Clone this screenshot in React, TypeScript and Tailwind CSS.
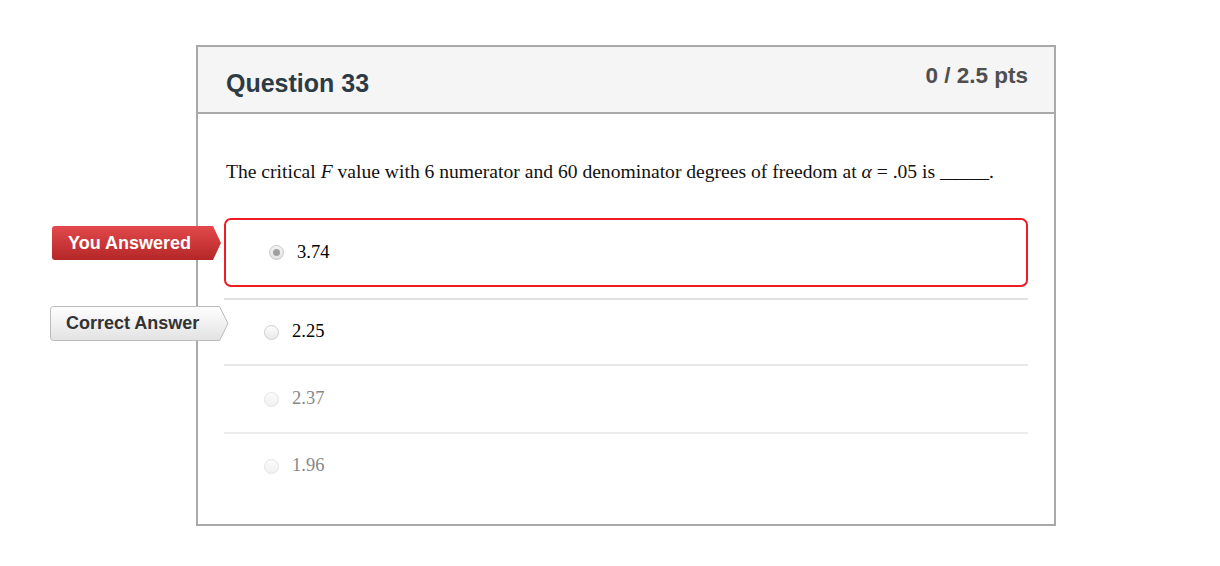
type RadioState = "selected" | "normal" | "faded";

const Radio = ({ state }: { state: RadioState }) => {
  if (state === "selected") {
    return (
      <div className="w-[15px] h-[15px] rounded-full border border-[#c8c8c8] bg-gradient-to-b from-[#f4f4f4] to-[#e2e2e2] flex items-center justify-center">
        <div className="w-[7px] h-[7px] rounded-full bg-[#a0a0a0]" />
      </div>
    );
  }
  if (state === "normal") {
    return <div className="w-[15px] h-[15px] rounded-full border border-[#cfcfcf] bg-gradient-to-b from-[#fdfdfd] to-[#e9e9e9]" />;
  }
  return <div className="w-[15px] h-[15px] rounded-full border border-[#e4e4e4] bg-gradient-to-b from-[#fbfbfb] to-[#f1f1f1]" />;
};

const YouAnsweredTag = () => (
  <div className="absolute left-[-172px] top-[8px] w-[170px] h-[34px] flex items-center">
    <svg className="absolute inset-0" width="170" height="34" viewBox="0 0 170 34">
      <defs>
        <linearGradient id="redTag" x1="0" y1="0" x2="0" y2="1">
          <stop offset="0" stopColor="#e2494b" />
          <stop offset="1" stopColor="#b42727" />
        </linearGradient>
      </defs>
      <path d="M3 0 H161 L169 17 L161 34 H3 Q0 34 0 31 V3 Q0 0 3 0 Z" fill="url(#redTag)" />
    </svg>
    <span className="relative pl-[16px] text-white font-bold text-[18px] font-['Liberation_Sans',Arial,sans-serif]">You Answered</span>
  </div>
);

const CorrectTag = () => (
  <div className="absolute left-[-174px] top-[6px] w-[179px] h-[35px] flex items-center">
    <svg className="absolute inset-0" width="179" height="35" viewBox="0 0 179 35">
      <defs>
        <linearGradient id="grayTag" x1="0" y1="0" x2="0" y2="1">
          <stop offset="0" stopColor="#ffffff" />
          <stop offset="1" stopColor="#e2e2e2" />
        </linearGradient>
      </defs>
      <path d="M3.5 0.5 H169.5 L178 17.5 L169.5 34.5 H3.5 Q0.5 34.5 0.5 31.5 V3.5 Q0.5 0.5 3.5 0.5 Z" fill="url(#grayTag)" stroke="#bcbcbc" />
    </svg>
    <span className="relative pl-[16px] text-[#333] font-bold text-[18px] font-['Liberation_Sans',Arial,sans-serif]">Correct Answer</span>
  </div>
);

const AnswerRow = ({ value, state, faded, h }: { value: string; state: RadioState; faded?: boolean; h: string }) => (
  <div className={h + " flex items-center pl-[40px]"}>
    <Radio state={state} />
    <span className={"ml-[13px] text-[18.5px] " + (faded ? "text-[#888]" : "text-black")}>{value}</span>
  </div>
);

const App = () => {
  return (
    <div className="w-[1220px] h-[566px] bg-white pl-[196px] pt-[45px] font-['Liberation_Serif','Times_New_Roman',serif]">
      <div className="w-[860px] h-[481px] border-2 border-[#a9a9a9] flex flex-col">
        <div className="h-[67px] bg-[#f5f5f5] border-b-2 border-[#a9a9a9] flex justify-between pl-[28px] pr-[26px] font-['Liberation_Sans',Arial,sans-serif]">
          <div className="pt-[21px] text-[25px] font-bold text-[#2d3b45] leading-[30px]">Question 33</div>
          <div className="pt-[16px] text-[22.5px] font-bold text-[#4f4f4f] leading-[26px]">0 / 2.5 pts</div>
        </div>

        <div className="px-[26px] pt-[46px]">
          <p className="text-[19.6px] leading-[24px] text-[#111] pl-[2px]">
            The critical <i>F</i> value with 6 numerator and 60 denominator degrees of freedom at <i>α</i> = .05 is _____.
          </p>

          <div className="mt-[34px]">
            <div className="relative pb-[11px] border-b-2 border-[#e2e2e2]">
              <YouAnsweredTag />
              <div className="h-[69px] border-2 border-[#ee1c25] rounded-[7px] flex items-center pl-[43px]">
                <Radio state="selected" />
                <span className="ml-[13px] text-[18.5px] text-black">3.74</span>
              </div>
            </div>

            <div className="relative border-b-2 border-[#e8e8e8]">
              <CorrectTag />
              <AnswerRow value="2.25" state="normal" h="h-[64px]" />
            </div>
            <div className="border-b-2 border-[#ececec]">
              <AnswerRow value="2.37" state="faded" faded h="h-[66px]" />
            </div>
            <AnswerRow value="1.96" state="faded" faded h="h-[64px]" />
          </div>
        </div>
      </div>
    </div>
  );
};

export default App;
